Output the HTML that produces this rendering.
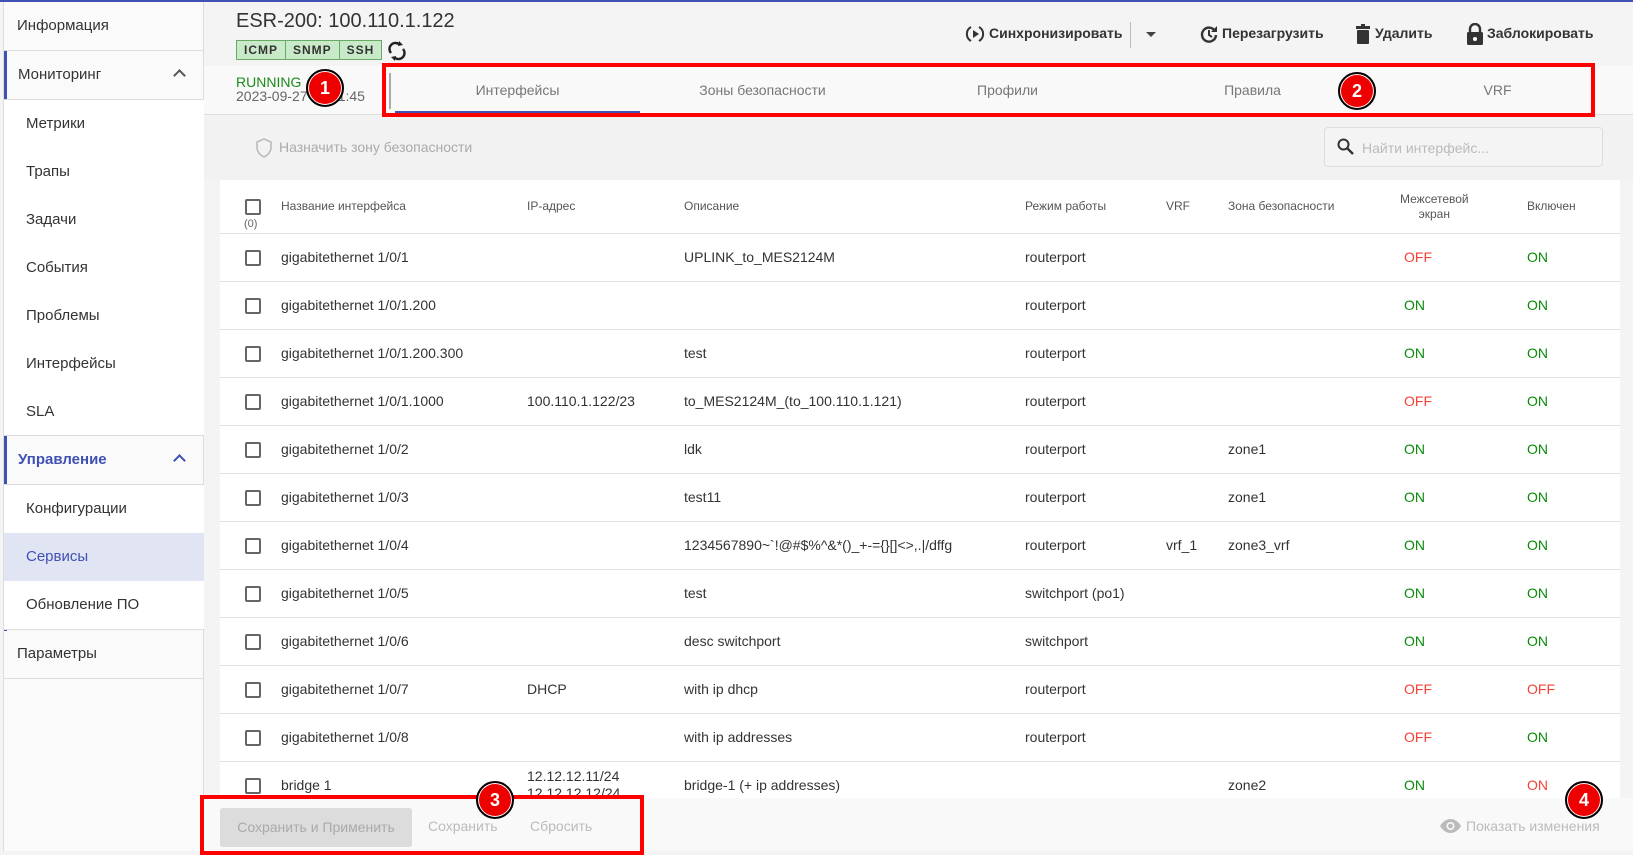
<!DOCTYPE html>
<html><head><meta charset="utf-8"><style>
*{box-sizing:border-box;margin:0;padding:0}
body{width:1633px;height:851px;overflow:hidden;background:#f4f4f4;font-family:"Liberation Sans","DejaVu Sans",sans-serif;color:#333;position:relative}
.a{position:absolute}
.topbar{left:0;top:0;width:1633px;height:2px;background:#3f51b5}
.side{left:3px;top:2px;width:201px;height:849px;background:#fafafa;border-left:1px solid #ddd;border-right:1px solid #ddd}
.si{position:absolute;left:0;width:200px;height:49px;border-bottom:1px solid #ddd;font-size:15px;line-height:48px;padding-left:13px;color:#333}
.sub{position:absolute;left:0;width:200px;height:48px;background:#fff;font-size:15px;line-height:48px;padding-left:22px;color:#333}
.chev{position:absolute;right:20px;top:20px;width:9px;height:9px;border-left:2px solid #555;border-top:2px solid #555;transform:rotate(45deg)}
.txt{position:absolute;white-space:nowrap}
.act{font-size:14px;font-weight:bold;color:#333;top:25px}
.tab{position:absolute;top:66px;height:49px;width:245px;text-align:center;line-height:48px;font-size:14px;color:#777}
.th{position:absolute;font-size:12px;color:#555;top:199px}
.cb{position:absolute;width:16px;height:16px;border:2px solid #666;border-radius:2px;left:245px}
.row{position:absolute;left:220px;width:1400px;height:48px;border-bottom:1px solid #e0e0e0}
.c{position:absolute;font-size:14px;color:#333;top:15px;white-space:nowrap}
.on{color:#0a8a0a}.off{color:#f44336}
.circ{position:absolute;width:38px;height:38px;border-radius:50%;background:#e00;border:2px solid #000;box-shadow:0 0 0 1px #fff inset;color:#fff;font-weight:bold;font-size:18px;text-align:center;line-height:34px}
.red{position:absolute;border:4px solid #f00}
</style></head><body>
<div class="a topbar"></div>
<div class="a side">
 <div class="si" style="top:0">Информация</div>
 <div class="a" style="left:0;top:49px;width:3px;height:580px;background:#3f51b5"></div>
 <div class="si" style="top:49px;padding-left:14px">Мониторинг<span class="chev"></span></div>
 <div class="sub" style="top:98px">Метрики</div>
 <div class="sub" style="top:146px">Трапы</div>
 <div class="sub" style="top:194px">Задачи</div>
 <div class="sub" style="top:242px">События</div>
 <div class="sub" style="top:290px">Проблемы</div>
 <div class="sub" style="top:338px">Интерфейсы</div>
 <div class="sub" style="top:386px;height:48px;border-bottom:1px solid #ddd">SLA</div>
 <div class="si" style="top:434px;color:#3f51b5;font-weight:bold;padding-left:14px">Управление<span class="chev" style="border-color:#3f51b5"></span></div>
 <div class="sub" style="top:483px">Конфигурации</div>
 <div class="sub" style="top:531px;background:#e1e4f2;color:#3f51b5">Сервисы</div>
 <div class="sub" style="top:579px;border-bottom:1px solid #ddd;height:49px">Обновление ПО</div>
 <div class="si" style="top:628px">Параметры</div>
</div>

<!-- header -->
<div class="txt" style="left:236px;top:10px;font-size:20px;color:#333">ESR-200: 100.110.1.122</div>
<div class="a" style="left:236px;top:40px;height:20px;display:flex;border:1px solid #6a6;background:#c8eac8;font-size:12px;font-weight:bold;color:#333;letter-spacing:1px">
 <div style="padding:2px 7px;border-right:1px solid #6a6">ICMP</div><div style="padding:2px 7px;border-right:1px solid #6a6">SNMP</div><div style="padding:2px 7px">SSH</div></div>
<svg class="a" style="left:387px;top:40px" width="20" height="22" viewBox="0 0 20 22"><path d="M4 13a6 6 0 0 1 9-8M16 9a6 6 0 0 1-9 8" fill="none" stroke="#222" stroke-width="2.4"/><path d="M12 1l4 4-5 1zM8 21l-4-4 5-1z" fill="#222"/></svg>

<svg class="a" style="left:965px;top:24px" width="20" height="20" viewBox="0 0 20 20"><path d="M6 3a8 8 0 0 0 0 14M14 3a8 8 0 0 1 0 14" fill="none" stroke="#333" stroke-width="2"/><path d="M8 6l6 4-6 4z" fill="#333"/></svg>
<div class="txt act" style="left:989px">Синхронизировать</div>
<div class="a" style="left:1130px;top:22px;width:1px;height:26px;background:#bbb"></div>
<div class="a" style="left:1146px;top:32px;border-left:5px solid transparent;border-right:5px solid transparent;border-top:5px solid #444"></div>
<svg class="a" style="left:1199px;top:24px" width="20" height="20" viewBox="0 0 20 20"><path d="M16 7a7 7 0 1 0 1 4" fill="none" stroke="#333" stroke-width="2.4"/><path d="M18 2v6h-6z" fill="#333"/><path d="M10 6v5l3 2" fill="none" stroke="#333" stroke-width="2"/></svg>
<div class="txt act" style="left:1222px">Перезагрузить</div>
<svg class="a" style="left:1355px;top:24px" width="16" height="20" viewBox="0 0 16 20"><rect x="1" y="2" width="14" height="3" fill="#333"/><rect x="6" y="0" width="4" height="3" fill="#333"/><rect x="2" y="6" width="12" height="14" rx="1" fill="#333"/></svg>
<div class="txt act" style="left:1375px">Удалить</div>
<svg class="a" style="left:1466px;top:23px" width="18" height="22" viewBox="0 0 18 22"><path d="M4 10V6a5 5 0 0 1 10 0v4" fill="none" stroke="#333" stroke-width="2.4"/><rect x="1" y="9" width="16" height="13" rx="1.5" fill="#333"/><circle cx="9" cy="16" r="2" fill="#fff"/></svg>
<div class="txt act" style="left:1487px">Заблокировать</div>

<!-- status/tabs band -->
<div class="a" style="left:204px;top:66px;width:1429px;height:49px;background:#f9f9f9;border-bottom:1px solid #ddd"></div>
<div class="txt" style="left:236px;top:74px;font-size:14px;color:#1a8a1a">RUNNING</div>
<div class="txt" style="left:236px;top:88px;font-size:14px;color:#666">2023-09-27 11:21:45</div>
<div class="a" style="left:389px;top:73px;width:2px;height:36px;background:#aaa"></div>
<div class="tab" style="left:395px">Интерфейсы</div>
<div class="a" style="left:395px;top:111px;width:245px;height:2px;background:#3f51b5"></div>
<div class="tab" style="left:640px">Зоны безопасности</div>
<div class="tab" style="left:885px">Профили</div>
<div class="tab" style="left:1130px">Правила</div>
<div class="tab" style="left:1375px">VRF</div>

<!-- toolbar -->
<div class="a" style="left:204px;top:116px;width:1429px;height:64px;background:#f2f2f2"></div>
<svg class="a" style="left:255px;top:138px" width="18" height="20" viewBox="0 0 18 20"><path d="M9 1l7 3v5c0 5-3 8-7 10-4-2-7-5-7-10V4z" fill="none" stroke="#bbb" stroke-width="1.6"/></svg>
<div class="txt" style="left:279px;top:139px;font-size:14px;color:#aaa">Назначить зону безопасности</div>
<div class="a" style="left:1324px;top:127px;width:279px;height:40px;border:1px solid #ddd;border-radius:4px;background:#f4f4f4"></div>
<svg class="a" style="left:1337px;top:138px" width="17" height="17" viewBox="0 0 17 17"><circle cx="6.5" cy="6.5" r="5" fill="none" stroke="#333" stroke-width="2"/><path d="M10 10l6 6" stroke="#333" stroke-width="2.4"/></svg>
<div class="txt" style="left:1362px;top:140px;font-size:14px;color:#bbb">Найти интерфейс...</div>

<!-- table -->
<div class="a" style="left:220px;top:180px;width:1400px;height:618px;background:#fff"></div>
<div class="a" style="left:220px;top:233px;width:1400px;height:1px;background:#e0e0e0"></div>
<div class="cb" style="top:199px"></div>
<div class="txt" style="left:244px;top:218px;font-size:11px;color:#666">(0)</div>
<div class="th" style="left:281px">Название интерфейса</div>
<div class="th" style="left:527px">IP-адрес</div>
<div class="th" style="left:684px">Описание</div>
<div class="th" style="left:1025px">Режим работы</div>
<div class="th" style="left:1166px">VRF</div>
<div class="th" style="left:1228px">Зона безопасности</div>
<div class="th" style="left:1400px;top:192px;text-align:center;line-height:15px">Межсетевой<br>экран</div>
<div class="th" style="left:1527px">Включен</div>

<div id="rows"></div>
<div class="row" style="top:234px"><div class="cb" style="left:25px;top:16px"></div><div class="c" style="left:61px">gigabitethernet 1/0/1</div><div class="c" style="left:464px">UPLINK_to_MES2124M</div><div class="c" style="left:805px">routerport</div><div class="c off" style="left:1184px">OFF</div><div class="c on" style="left:1307px">ON</div></div>
<div class="row" style="top:282px"><div class="cb" style="left:25px;top:16px"></div><div class="c" style="left:61px">gigabitethernet 1/0/1.200</div><div class="c" style="left:805px">routerport</div><div class="c on" style="left:1184px">ON</div><div class="c on" style="left:1307px">ON</div></div>
<div class="row" style="top:330px"><div class="cb" style="left:25px;top:16px"></div><div class="c" style="left:61px">gigabitethernet 1/0/1.200.300</div><div class="c" style="left:464px">test</div><div class="c" style="left:805px">routerport</div><div class="c on" style="left:1184px">ON</div><div class="c on" style="left:1307px">ON</div></div>
<div class="row" style="top:378px"><div class="cb" style="left:25px;top:16px"></div><div class="c" style="left:61px">gigabitethernet 1/0/1.1000</div><div class="c" style="left:307px">100.110.1.122/23</div><div class="c" style="left:464px">to_MES2124M_(to_100.110.1.121)</div><div class="c" style="left:805px">routerport</div><div class="c off" style="left:1184px">OFF</div><div class="c on" style="left:1307px">ON</div></div>
<div class="row" style="top:426px"><div class="cb" style="left:25px;top:16px"></div><div class="c" style="left:61px">gigabitethernet 1/0/2</div><div class="c" style="left:464px">ldk</div><div class="c" style="left:805px">routerport</div><div class="c" style="left:1008px">zone1</div><div class="c on" style="left:1184px">ON</div><div class="c on" style="left:1307px">ON</div></div>
<div class="row" style="top:474px"><div class="cb" style="left:25px;top:16px"></div><div class="c" style="left:61px">gigabitethernet 1/0/3</div><div class="c" style="left:464px">test11</div><div class="c" style="left:805px">routerport</div><div class="c" style="left:1008px">zone1</div><div class="c on" style="left:1184px">ON</div><div class="c on" style="left:1307px">ON</div></div>
<div class="row" style="top:522px"><div class="cb" style="left:25px;top:16px"></div><div class="c" style="left:61px">gigabitethernet 1/0/4</div><div class="c" style="left:464px">1234567890~`!@#$%^&amp;*()_+-={}[]&lt;&gt;,.|/dffg</div><div class="c" style="left:805px">routerport</div><div class="c" style="left:946px">vrf_1</div><div class="c" style="left:1008px">zone3_vrf</div><div class="c on" style="left:1184px">ON</div><div class="c on" style="left:1307px">ON</div></div>
<div class="row" style="top:570px"><div class="cb" style="left:25px;top:16px"></div><div class="c" style="left:61px">gigabitethernet 1/0/5</div><div class="c" style="left:464px">test</div><div class="c" style="left:805px">switchport (po1)</div><div class="c on" style="left:1184px">ON</div><div class="c on" style="left:1307px">ON</div></div>
<div class="row" style="top:618px"><div class="cb" style="left:25px;top:16px"></div><div class="c" style="left:61px">gigabitethernet 1/0/6</div><div class="c" style="left:464px">desc switchport</div><div class="c" style="left:805px">switchport</div><div class="c on" style="left:1184px">ON</div><div class="c on" style="left:1307px">ON</div></div>
<div class="row" style="top:666px"><div class="cb" style="left:25px;top:16px"></div><div class="c" style="left:61px">gigabitethernet 1/0/7</div><div class="c" style="left:307px">DHCP</div><div class="c" style="left:464px">with ip dhcp</div><div class="c" style="left:805px">routerport</div><div class="c off" style="left:1184px">OFF</div><div class="c off" style="left:1307px">OFF</div></div>
<div class="row" style="top:714px"><div class="cb" style="left:25px;top:16px"></div><div class="c" style="left:61px">gigabitethernet 1/0/8</div><div class="c" style="left:464px">with ip addresses</div><div class="c" style="left:805px">routerport</div><div class="c off" style="left:1184px">OFF</div><div class="c on" style="left:1307px">ON</div></div>
<div class="row" style="top:762px;height:36px;overflow:hidden;border:none"><div class="cb" style="left:25px;top:16px"></div><div class="c" style="left:61px">bridge 1</div><div class="c" style="left:307px;top:6px;line-height:17px">12.12.12.11/24<br>12.12.12.12/24</div><div class="c" style="left:464px">bridge-1 (+ ip addresses)</div><div class="c" style="left:1008px">zone2</div><div class="c on" style="left:1184px">ON</div><div class="c off" style="left:1307px">ON</div></div>

<!-- footer -->
<div class="a" style="left:204px;top:798px;width:1429px;height:53px;background:#f9f9f9"></div>
<div class="a" style="left:220px;top:808px;width:192px;height:39px;background:#dcdcdc;border-radius:3px;font-size:14px;color:#aaa;text-align:center;line-height:39px">Сохранить и Применить</div>
<div class="txt" style="left:428px;top:818px;font-size:14px;color:#bbb">Сохранить</div>
<div class="txt" style="left:530px;top:818px;font-size:14px;color:#bbb">Сбросить</div>
<svg class="a" style="left:1439px;top:818px" width="23" height="16" viewBox="0 0 23 16"><path d="M1 8C4 3 8 1 11.5 1S19 3 22 8c-3 5-7 7-10.5 7S4 13 1 8z" fill="#bbb"/><circle cx="11.5" cy="8" r="4" fill="#f9f9f9"/><circle cx="11.5" cy="8" r="2.4" fill="#bbb"/></svg>
<div class="txt" style="left:1466px;top:818px;font-size:14px;color:#bbb">Показать изменения</div>

<!-- annotations -->
<div class="red" style="left:382px;top:63px;width:1213px;height:54px"></div>
<div class="red" style="left:200px;top:795px;width:444px;height:60px"></div>
<div class="circ" style="left:306px;top:69px">1</div>
<div class="circ" style="left:1338px;top:72px">2</div>
<div class="circ" style="left:476px;top:781px">3</div>
<div class="circ" style="left:1565px;top:781px">4</div>
</body></html>
